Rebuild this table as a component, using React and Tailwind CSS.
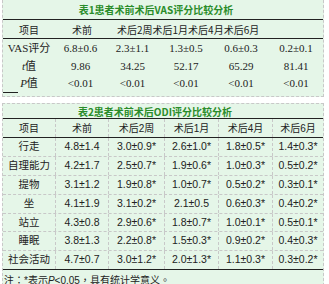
import React from "react";

const serif = "font-['Liberation_Serif','Noto_Sans_CJK_SC',serif]";
const sans = "font-['Liberation_Sans','Noto_Sans_CJK_SC',sans-serif]";

const vasRows = [
  ["VAS评分", "6.8±0.6", "2.3±1.1", "1.3±0.5", "0.6±0.3", "0.2±0.1"],
  [<><i>t</i>值</>, "9.86", "34.25", "52.17", "65.29", "81.41"],
  [<><i>P</i>值</>, "<0.01", "<0.01", "<0.01", "<0.01", "<0.01"],
];

const odiRows = [
  ["行走", "4.8±1.4", "3.0±0.9*", "2.6±1.0*", "1.8±0.5*", "1.4±0.3*"],
  ["自理能力", "4.2±1.7", "2.5±0.7*", "1.9±0.6*", "1.0±0.3*", "0.5±0.2*"],
  ["提物", "3.1±1.2", "1.9±0.8*", "1.0±0.7*", "0.5±0.2*", "0.3±0.1*"],
  ["坐", "4.1±1.9", "3.1±0.2*", "2.1±0.5", "0.6±0.3*", "0.4±0.2*"],
  ["站立", "4.3±0.8", "2.9±0.6*", "1.8±0.7*", "1.0±0.1*", "0.5±0.1*"],
  ["睡眠", "3.8±1.3", "2.2±0.8*", "1.5±0.3*", "0.9±0.2*", "0.4±0.3*"],
  ["社会活动", "4.7±0.7", "3.0±1.2*", "2.0±1.3*", "1.1±0.3*", "0.3±0.2*"],
];

const rowH = ["h-[19px]", "h-[19px]", "h-[19px]", "h-[19px]", "h-[18px]", "h-[19px]", "h-[19px]"];

const App = () => (
  <main className="w-[329px] h-[284px] overflow-hidden bg-white text-[#222]">
    {/* 表1 */}
    <section className={`ml-[2px] w-[322px] border border-t-0 border-dashed border-[#c8c8c8] bg-[#e5f6e8] ${serif}`}>
      <div className="h-[20px] border-b border-[#222] flex items-center justify-center pr-[14px] text-[10px] font-bold text-[#2a8c2a] font-['Noto_Sans_CJK_SC',sans-serif]">
        表1患者术前术后VAS评分比较分析
      </div>
      <div className="h-[19px] border-b border-[#222] grid grid-cols-[52px_51px_215px] items-center text-[10px] font-['Noto_Sans_CJK_SC',sans-serif]">
        <div className="text-center">项目</div>
        <div className="text-center pl-[3px]">术前</div>
        <div className="pl-[11px]">术后2周术后1月术后4月术后6月</div>
      </div>
      {vasRows.map((r, i) => (
        <div
          key={i}
          className={`${i === 2 ? "h-[17px]" : "h-[18px]"} grid grid-cols-[52px_51px_53px_54px_56px_54px] items-center text-[11px]`}
        >
          {r.map((c, j) => (
            <div key={j} className="text-center whitespace-nowrap">{c}</div>
          ))}
        </div>
      ))}
      <div className="w-[15px] h-px bg-[#222]"></div>
      <div className="h-[3px]"></div>
    </section>

    {/* 表2 */}
    <section className={`mt-[6px] ml-[2px] w-[322px] border border-dashed border-[#c8c8c8] bg-[#e5f6e8] ${sans}`}>
      <div className="h-[15px] border-b border-[#222] flex items-center justify-center pr-[16px] text-[10px] font-bold text-[#2a8c2a] font-['Noto_Sans_CJK_SC',sans-serif]">
        表2患者术前术后ODI评分比较分析
      </div>
      <div className="h-[19px] border-b border-[#222] grid grid-cols-[53px_53px_56px_54px_54px_50px] text-[10px]">
        {["项目", "术前", "术后2周", "术后1月", "术后4月", "术后6月"].map((h, j) => (
          <div key={j} className={`flex items-center justify-center ${j < 5 ? "border-r border-dashed border-[#c8c8c8]" : ""}`}>
            {h}
          </div>
        ))}
      </div>
      {odiRows.map((r, i) => (
        <div
          key={i}
          className={`${rowH[i]} grid grid-cols-[53px_53px_56px_54px_54px_50px] text-[10.5px] border-b ${i === 6 ? "border-solid border-[#222]" : "border-dashed border-[#c8c8c8]"}`}
        >
          {r.map((c, j) => (
            <div key={j} className={`flex items-center justify-center whitespace-nowrap ${j < 5 ? "border-r border-dashed border-[#c8c8c8]" : ""}`}>
              {c}
            </div>
          ))}
        </div>
      ))}
      <div className="h-[20px] flex items-center pl-px text-[10px] whitespace-nowrap font-['Liberation_Sans','Noto_Sans_CJK_TC',sans-serif]">
        注：*表示<i>P</i>&lt;0.05，具有统计学意义。
      </div>
    </section>
  </main>
);

export default App;
